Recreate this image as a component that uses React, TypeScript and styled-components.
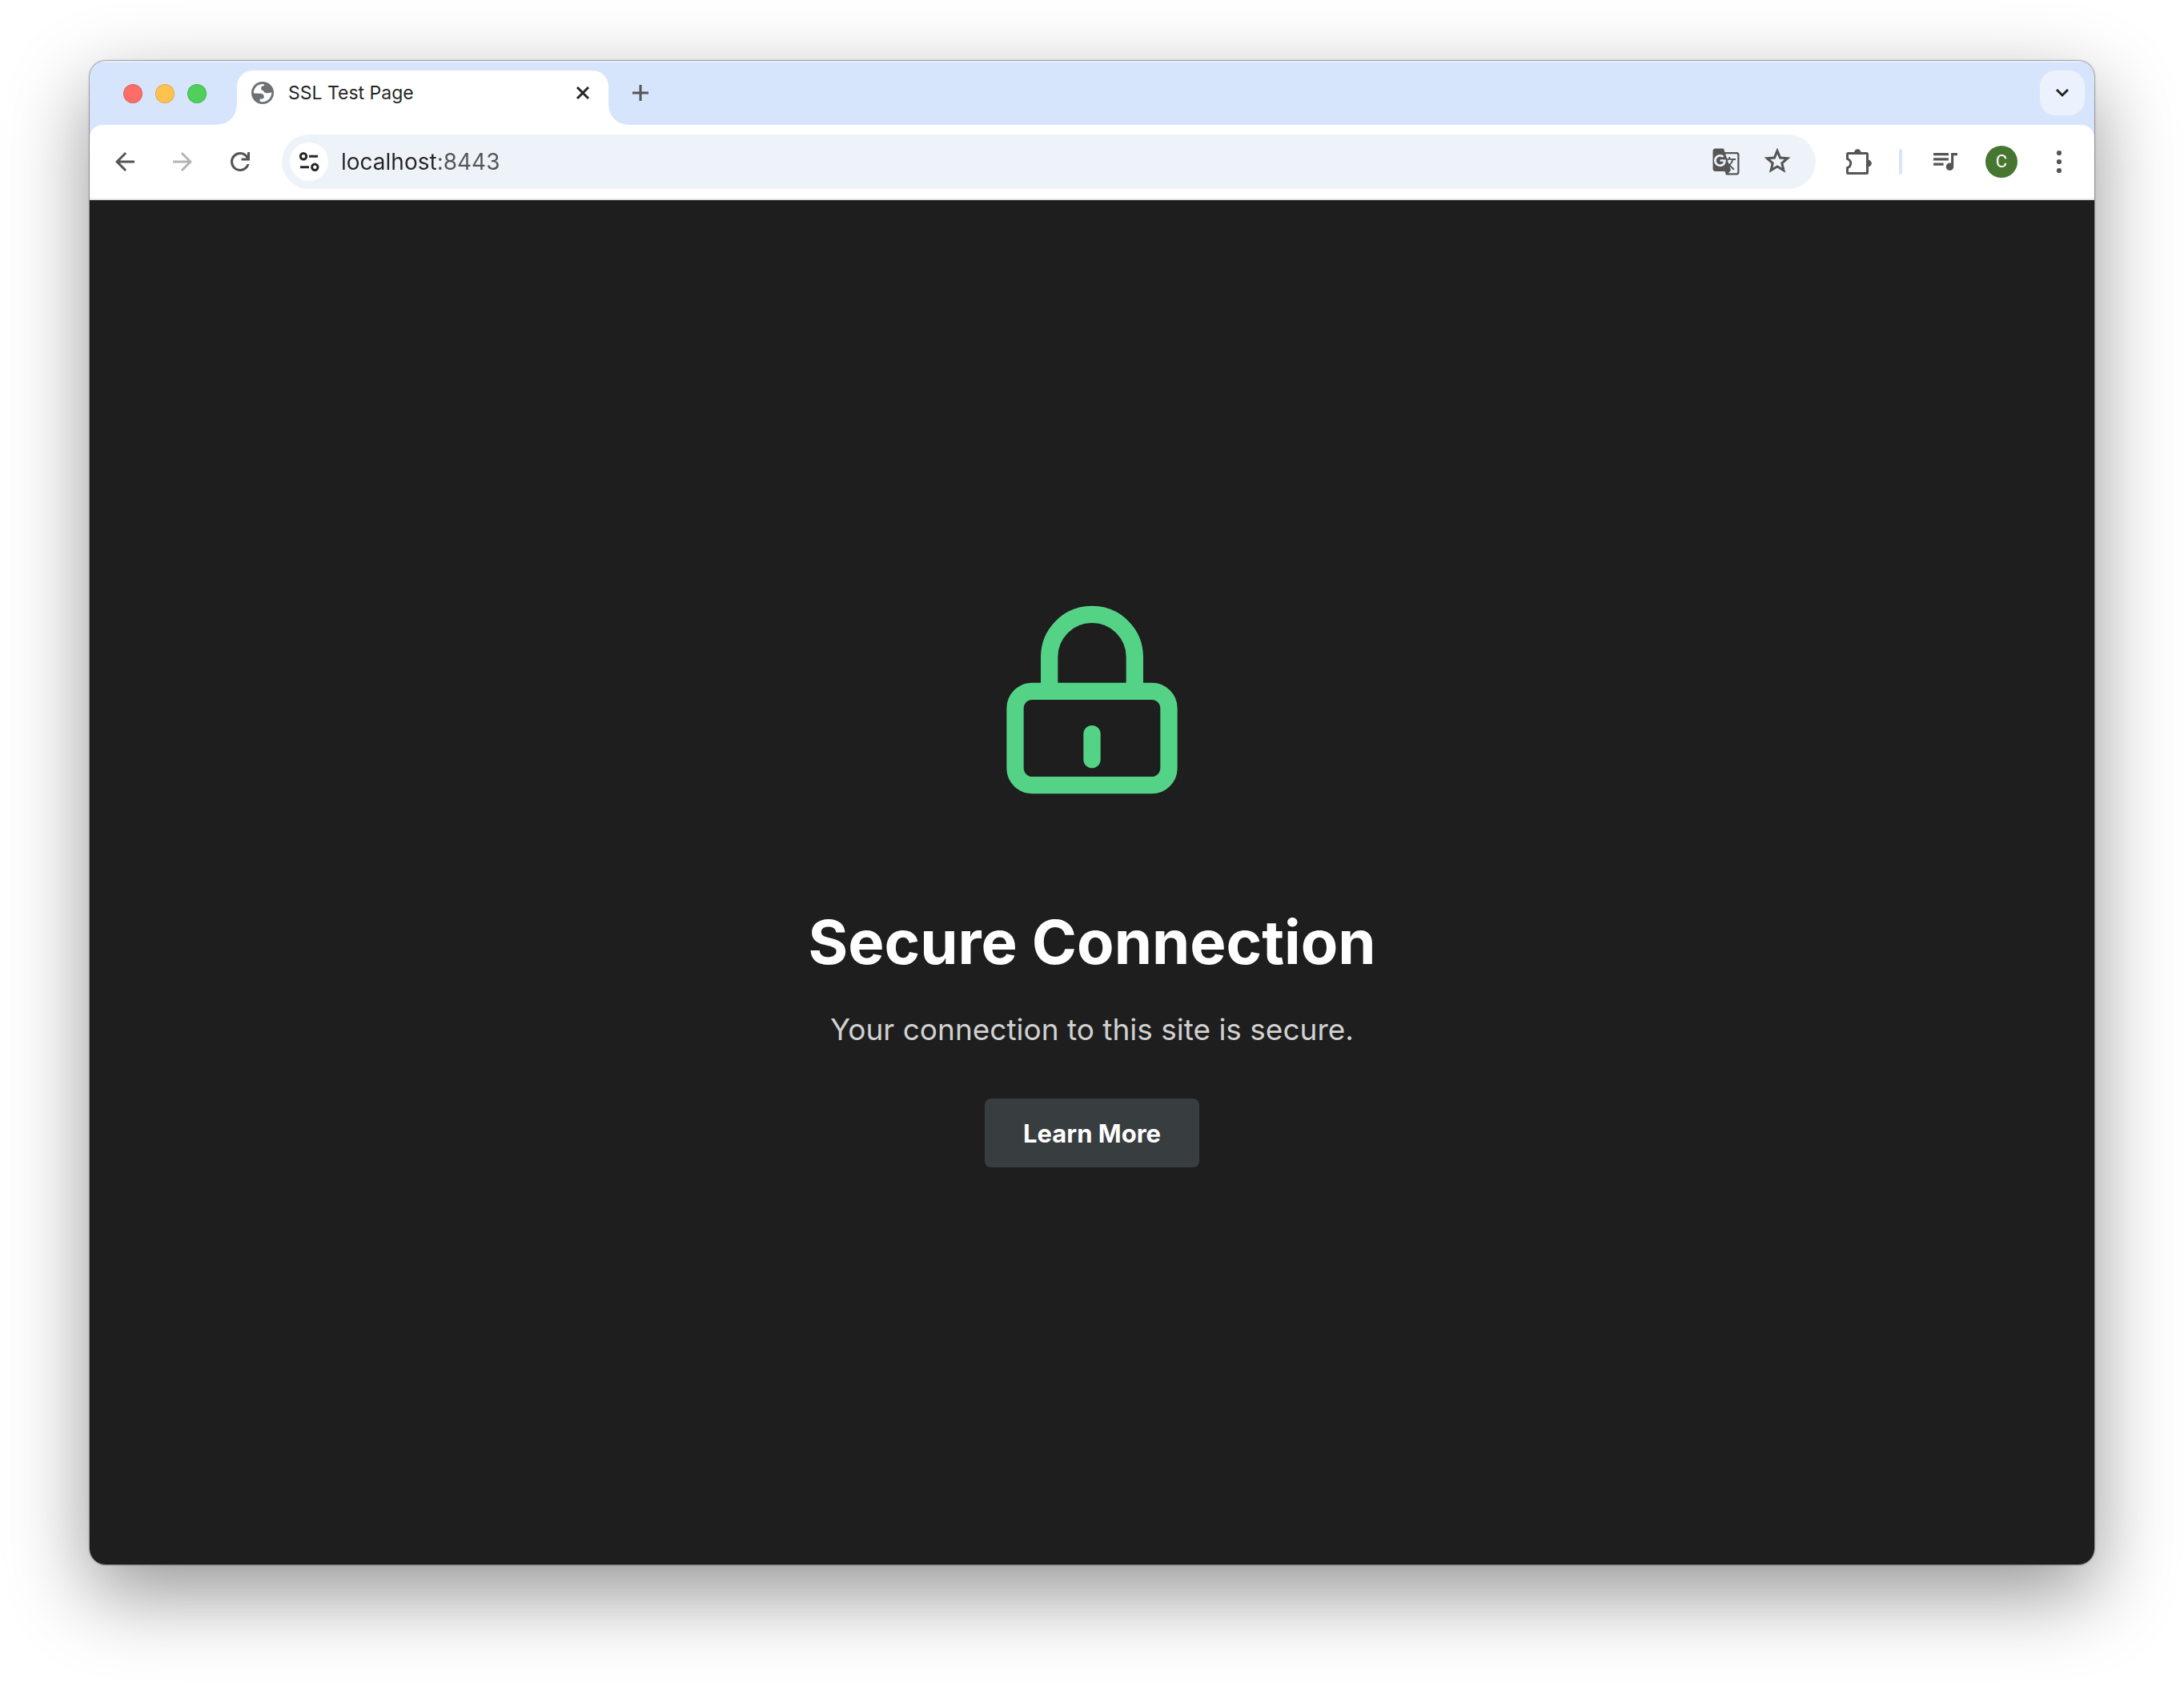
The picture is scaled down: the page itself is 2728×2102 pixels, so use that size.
import React from "react";
import styled, { createGlobalStyle } from "styled-components";
import { MdGTranslate } from "react-icons/md";

const color = {
  strip: "#d7e5fc",
  soft: "#eef3fa",
  chip: "#ebf2fe",
  icon: "#555555",
  faint: "#b5b5b5",
  ink: "#262626",
  page: "#1e1e1e",
  green: "#54d286",
};

const GlobalStyle = createGlobalStyle`
  *, *::before, *::after { box-sizing: border-box; }
  body {
    margin: 0;
    background: #ffffff;
    font-family: Inter, "Liberation Sans", sans-serif;
  }
  button, input { font: inherit; }
`;

const Desktop = styled.div`
  display: flex;
  min-height: 100vh;
  padding: 76px 112px 148px;
  overflow: hidden;
`;

const BrowserWindow = styled.div`
  flex: 1;
  min-width: 0;
  display: flex;
  flex-direction: column;
  overflow: hidden;
  border-radius: 20px;
  background: ${color.strip};
  box-shadow: 0 0 0 1px rgba(0, 0, 0, 0.22), 0 0 3px rgba(0, 0, 0, 0.3),
    0 36px 100px rgba(0, 0, 0, 0.42);
`;

const TabStrip = styled.header`
  display: flex;
  align-items: flex-start;
  height: 80px;
  padding: 12px 12px 0 42px;
  box-shadow: inset 0 2px 0 rgba(255, 255, 255, 0.4);
`;

const TrafficLights = styled.div`
  display: flex;
  gap: 16px;
  width: 142px;
  padding-top: 17px;
`;

const Light = styled.button<{ $fill: string }>`
  width: 24px;
  height: 24px;
  padding: 0;
  border: 1px solid rgba(0, 0, 0, 0.12);
  border-radius: 50%;
  background: ${(p) => p.$fill};
`;

const Tab = styled.div`
  position: relative;
  display: flex;
  align-items: center;
  width: 464px;
  height: 68px;
  padding: 0 18px 12px;
  border-radius: 20px 20px 0 0;
  background: #ffffff;

  &::before,
  &::after {
    content: "";
    position: absolute;
    bottom: 0;
    width: 24px;
    height: 24px;
  }
  &::before {
    right: 100%;
    background: radial-gradient(circle at 0 0, transparent 23px, #ffffff 24px);
  }
  &::after {
    left: 100%;
    background: radial-gradient(circle at 100% 0, transparent 23px, #ffffff 24px);
  }
`;

const TabTitle = styled.span`
  flex: 1;
  padding-left: 18px;
  color: ${color.ink};
  font-size: 23px;
  line-height: 32px;
`;

const IconButton = styled.button<{ $size?: number; $tone?: string }>`
  display: flex;
  flex: none;
  align-items: center;
  justify-content: center;
  width: ${(p) => p.$size ?? 56}px;
  height: ${(p) => p.$size ?? 56}px;
  padding: 0;
  border: 0;
  border-radius: 20px;
  background: transparent;
  color: ${(p) => p.$tone ?? color.icon};

  svg { display: block; flex: none; }
`;

const NewTab = styled(IconButton)`
  margin-left: 12px;
`;

const TabSearch = styled(IconButton)`
  margin-left: auto;
  background: ${color.chip};
`;

const Toolbar = styled.nav`
  display: flex;
  align-items: center;
  height: 94px;
  padding: 0 18px 0 16px;
  border-bottom: 2px solid #e1e1e1;
  border-radius: 16px 16px 0 0;
  background: #ffffff;
`;

const NavButtons = styled.div`
  display: flex;
  gap: 16px;
  margin-right: 24px;
`;

const Omnibox = styled.div`
  display: flex;
  flex: 1;
  align-items: center;
  min-width: 0;
  height: 68px;
  padding: 0 24px 0 10px;
  border-radius: 34px;
  background: ${color.soft};
`;

const SiteInfo = styled(IconButton)`
  border-radius: 50%;
  background: #ffffff;
`;

const Address = styled.input`
  flex: 1;
  min-width: 0;
  height: 48px;
  margin-left: 16px;
  padding: 0;
  border: 0;
  outline: 0;
  background: linear-gradient(to right, ${color.ink} 120px, ${color.icon} 120px);
  background-clip: text;
  -webkit-background-clip: text;
  color: transparent;
  font-size: 28px;
`;

const OmniActions = styled.div`
  display: flex;
  gap: 16px;
`;

const Actions = styled.div`
  display: flex;
  align-items: center;
  gap: 26px;
  padding-left: 30px;
`;

const Divider = styled.span`
  width: 4px;
  height: 32px;
  margin-right: 4px;
  border-radius: 2px;
  background: ${color.strip};
`;

const Avatar = styled.button`
  width: 40px;
  height: 40px;
  padding: 0;
  border: 0;
  border-radius: 50%;
  background: #467630;
  color: #ffffff;
  font-family: Roboto, sans-serif;
  font-size: 22px;
  line-height: 40px;
`;

const Page = styled.main`
  display: flex;
  flex: 1;
  flex-direction: column;
  align-items: center;
  justify-content: center;
  background: ${color.page};
  text-align: center;
`;

const Heading = styled.h1`
  margin: 126px 0 0;
  color: #ffffff;
  font-size: 76px;
  font-weight: 700;
  line-height: 96px;
`;

const Message = styled.p`
  margin: 34px 0 58px;
  color: #d1d1d1;
  font-size: 37px;
  line-height: 56px;
`;

const LearnMore = styled.button`
  height: 86px;
  padding: 0 48px;
  border: 0;
  border-radius: 8px;
  background: #383d40;
  color: #ffffff;
  font-size: 31px;
  font-weight: 700;
`;

const Symbol = ({ d }: { d: string }) => (
  <svg width="36" height="36" viewBox="0 -960 960 960" fill="currentColor">
    <path d={d} />
  </svg>
);

const BACK = "m313-440 224 224-57 56-320-320 320-320 57 56-224 224h487v80H313Z";
const FORWARD = "M647-440H160v-80h487L423-744l57-56 320 320-320 320-57-56 224-224Z";
const RELOAD =
  "M480-160q-134 0-227-93t-93-227q0-134 93-227t227-93q69 0 132 28.5T720-690v-110h80v280H520v-80h168q-32-56-87.5-88T480-720q-100 0-170 70t-70 170q0 100 70 170t170 70q77 0 139-44t87-116h84q-28 106-114 173t-196 67Z";

const Globe = () => (
  <svg width="28" height="28" viewBox="0 0 28 28">
    <circle cx="14" cy="14" r="14" fill="#6d7176" />
    <path
      d="M2.800 14.600C2.600 8.600 7 3.400 13 2.900 15 2.800 16.400 3.200 16.200 4.200 16 5.400 12.600 5.200 12.200 7.200 12 9 12.400 11 14 11 16 11.200 15.400 13.800 17.600 14 20 14.600 23 14.400 25.200 13.200 25.600 19.400 20.400 25.200 14 25.200 12.600 25.200 11 24.800 10.600 24.400V21.600C13 22 15.600 21.400 15.800 19.200 15.800 16 13.400 14.800 10.800 14.800Z"
      fill="#ffffff"
    />
  </svg>
);

const CloseIcon = () => (
  <svg width="28" height="28" viewBox="0 0 28 28" stroke="currentColor" strokeWidth="3">
    <path d="M7 7 21 21M21 7 7 21" />
  </svg>
);

const PlusIcon = () => (
  <svg width="28" height="28" viewBox="0 0 28 28" stroke="currentColor" strokeWidth="3">
    <path d="M14 4V24M4 14H24" />
  </svg>
);

const ChevronIcon = () => (
  <svg width="28" height="28" viewBox="0 0 28 28" fill="none" stroke="currentColor" strokeWidth="3">
    <path d="M7 10 14 17 21 10" />
  </svg>
);

const SiteControlsIcon = () => (
  <svg width="28" height="28" viewBox="0 0 28 28" fill="none" stroke="currentColor" strokeWidth="3">
    <circle cx="7" cy="7.300" r="3.700" />
    <path d="M14 7.300H25M3 20.700H14" />
    <circle cx="21.300" cy="20.700" r="3.700" />
  </svg>
);

const StarIcon = () => (
  <svg width="36" height="36" viewBox="2 2 20 20" fill="none" stroke="currentColor" strokeWidth="1.7">
    <path d="M12 4.500 13.980 9.190 19.060 9.620 15.210 12.960 16.360 17.920 12 15.290 7.640 17.920 8.790 12.960 4.940 9.620 10.020 9.190Z" />
  </svg>
);

const QueueMusicIcon = () => (
  <svg width="30" height="22" viewBox="3 6 19 14" fill="currentColor">
    <path d="M15 6H3v2h12V6zm0 4H3v2h12v-2zM3 16h8v-2H3v2zM17 6v8.180c-.31-.11-.65-.18-1-.18-1.660 0-3 1.340-3 3s1.340 3 3 3 3-1.340 3-3V8h3V6h-5z" />
  </svg>
);

const ExtensionIcon = () => (
  <svg width="32" height="32" viewBox="0 0 32 32" fill="none" stroke="currentColor" strokeWidth="3">
    <path
      d="M1.500 12.600V6.500a1 1 0 0 1 1-1H25.500a1 1 0 0 1 1 1V29.500a1 1 0 0 1-1 1H2.500a1 1 0 0 1-1-1V23.400C7 22 7 14 1.500 12.600Z"
      strokeLinejoin="round"
    />
    <path
      d="M10 4.500a4.300 4.300 0 0 1 8.600 0ZM27.500 13.700a4.300 4.300 0 0 1 0 8.600Z"
      fill="currentColor"
      stroke="none"
    />
  </svg>
);

const MoreIcon = () => (
  <svg width="32" height="32" viewBox="0 0 32 32" fill="currentColor">
    <circle cx="16" cy="5" r="3.100" />
    <circle cx="16" cy="16" r="3.100" />
    <circle cx="16" cy="27" r="3.100" />
  </svg>
);

const LockIcon = () => (
  <svg
    width="256"
    height="256"
    viewBox="0 0 24 24"
    fill="none"
    stroke={color.green}
    strokeWidth="2"
    strokeLinecap="round"
    strokeLinejoin="round"
    aria-hidden="true"
  >
    <rect x="3" y="11" width="18" height="11" rx="2" />
    <path d="M7 11V7a5 5 0 0 1 10 0v4M12 16v3" />
  </svg>
);

export default function App() {
  return (
    <>
      <GlobalStyle />
      <Desktop>
        <BrowserWindow>
          <TabStrip>
            <TrafficLights>
              <Light $fill="#fe6d68" aria-label="Close window" />
              <Light $fill="#fec250" aria-label="Minimize window" />
              <Light $fill="#50cf5d" aria-label="Zoom window" />
            </TrafficLights>
            <Tab>
              <Globe />
              <TabTitle>SSL Test Page</TabTitle>
              <IconButton $size={28} $tone={color.ink} aria-label="Close tab">
                <CloseIcon />
              </IconButton>
            </Tab>
            <NewTab aria-label="New tab">
              <PlusIcon />
            </NewTab>
            <TabSearch $tone={color.ink} aria-label="Search tabs">
              <ChevronIcon />
            </TabSearch>
          </TabStrip>

          <Toolbar aria-label="Browser toolbar">
            <NavButtons>
              <IconButton aria-label="Back">
                <Symbol d={BACK} />
              </IconButton>
              <IconButton $tone={color.faint} aria-label="Forward">
                <Symbol d={FORWARD} />
              </IconButton>
              <IconButton aria-label="Reload">
                <Symbol d={RELOAD} />
              </IconButton>
            </NavButtons>
            <Omnibox>
              <SiteInfo $size={48} $tone={color.ink} aria-label="Site information">
                <SiteControlsIcon />
              </SiteInfo>
              <Address aria-label="Address" defaultValue="localhost:8443" spellCheck={false} />
              <OmniActions>
                <IconButton $size={48} aria-label="Translate this page">
                  <MdGTranslate size={36} />
                </IconButton>
                <IconButton $size={48} aria-label="Bookmark this tab">
                  <StarIcon />
                </IconButton>
              </OmniActions>
            </Omnibox>
            <Actions>
              <IconButton $size={48} aria-label="Extensions">
                <ExtensionIcon />
              </IconButton>
              <Divider />
              <IconButton $size={48} aria-label="Media controls">
                <QueueMusicIcon />
              </IconButton>
              <Avatar aria-label="Profile">C</Avatar>
              <IconButton $size={52} aria-label="Menu">
                <MoreIcon />
              </IconButton>
            </Actions>
          </Toolbar>

          <Page>
            <LockIcon />
            <Heading>Secure Connection</Heading>
            <Message>Your connection to this site is secure.</Message>
            <LearnMore>Learn More</LearnMore>
          </Page>
        </BrowserWindow>
      </Desktop>
    </>
  );
}
